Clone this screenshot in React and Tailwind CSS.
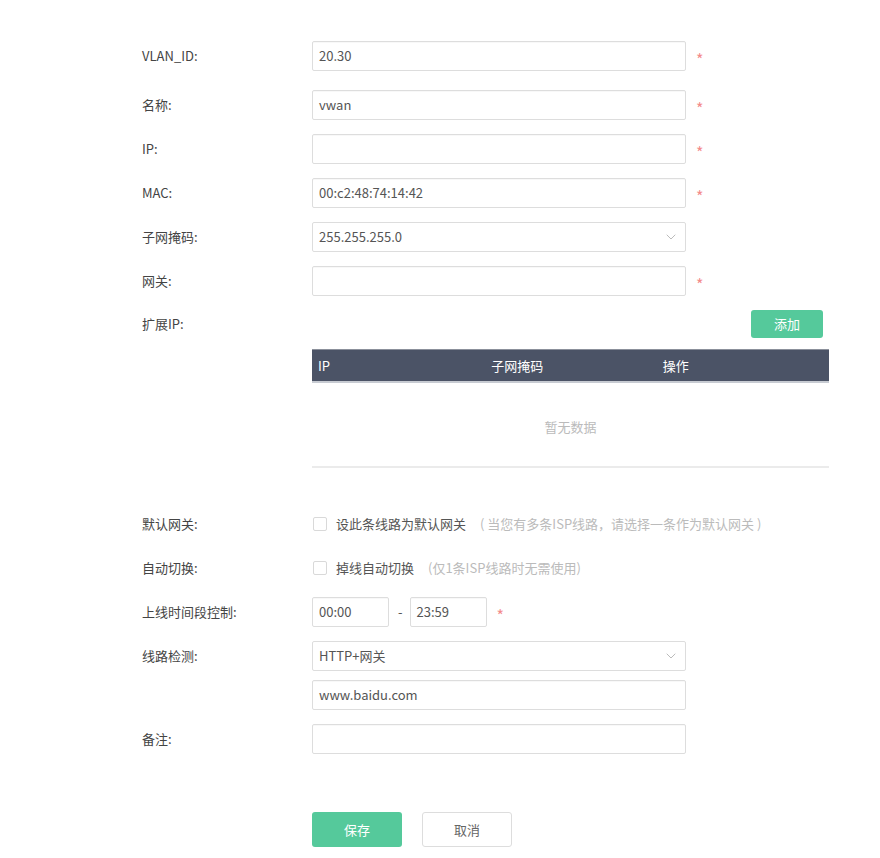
import { ChevronDown } from 'lucide-react'

const font = { fontFamily: '"Microsoft YaHei", "Noto Sans CJK SC", "Noto Sans", sans-serif' }

function Star() {
  return <span className="ml-[10px] mt-[6px] text-[16px] leading-none text-[#f38b8b]">*</span>
}

function Row({ label, children, className = '' }) {
  return (
    <div className={`flex items-center ${className}`}>
      <div className="w-[170px] shrink-0 text-[13px] text-[#444]">{label}</div>
      <div className="flex items-center">{children}</div>
    </div>
  )
}

function Input({ value = '', w = 'w-[374px]' }) {
  return (
    <div className={`${w} h-[30px] border border-[#ddd] rounded-[2px] bg-white px-[6px] flex items-center text-[13px] text-[#555] shadow-[inset_0_1px_1px_rgba(0,0,0,0.03)]`}>
      {value}
    </div>
  )
}

function Select({ value }) {
  return (
    <div className="w-[374px] h-[30px] border border-[#ddd] rounded-[2px] bg-white pl-[6px] pr-[6px] flex items-center justify-between text-[13px] text-[#555]">
      <span>{value}</span>
      <ChevronDown size={16} strokeWidth={1} className="text-[#999]" />
    </div>
  )
}

function Check({ label, hint }) {
  return (
    <div className="flex items-center text-[13px]">
      <span className="w-[14px] h-[14px] border border-[#d9d9d9] rounded-[2px] bg-white ml-[1px]" />
      <span className="ml-[9px] text-[#555]">{label}</span>
      <span className="ml-[14px] text-[#bbb]">{hint}</span>
    </div>
  )
}

export default function App() {
  return (
    <div className="w-[880px] h-[858px] bg-white pl-[142px] overflow-hidden" style={font}>
      <Row label="VLAN_ID:" className="mt-[41px]"><Input value="20.30" /><Star /></Row>
      <Row label="名称:" className="mt-[19px]"><Input value="vwan" /><Star /></Row>
      <Row label="IP:" className="mt-[14px]"><Input /><Star /></Row>
      <Row label="MAC:" className="mt-[14px]"><Input value="00:c2:48:74:14:42" /><Star /></Row>
      <Row label="子网掩码:" className="mt-[14px]"><Select value="255.255.255.0" /></Row>
      <Row label="网关:" className="mt-[14px]"><Input /><Star /></Row>

      <div className="flex items-center mt-[14px] h-[28px]">
        <div className="w-[170px] shrink-0 text-[13px] text-[#444]">扩展IP:</div>
        <div className="w-[511px] flex justify-end">
          <button className="w-[72px] h-[28px] rounded-[3px] bg-[#55c99b] text-white text-[13px]">添加</button>
        </div>
      </div>

      <div className="ml-[170px] mt-[11px] w-[517px]">
        <div className="h-[34px] bg-[#4b5366] border-t border-[#8b909b] border-b-2 border-b-[#c7cbd2] grid grid-cols-3 items-center text-[13px] text-white">
          <span className="pl-[6px]">IP</span>
          <span className="pl-[7px]">子网掩码</span>
          <span className="pl-[6px]">操作</span>
        </div>
        <div className="h-[85px] pt-[5px] border-b-2 border-[#ebebeb] flex items-center justify-center text-[13px] text-[#bbb]">
          暂无数据
        </div>
      </div>

      <Row label="默认网关:" className="mt-[46px] h-[20px]">
        <Check label="设此条线路为默认网关" hint="( 当您有多条ISP线路，请选择一条作为默认网关 )" />
      </Row>
      <Row label="自动切换:" className="mt-[24px] h-[20px]">
        <Check label="掉线自动切换" hint="(仅1条ISP线路时无需使用)" />
      </Row>
      <Row label="上线时间段控制:" className="mt-[19px]">
        <Input value="00:00" w="w-[77px]" />
        <span className="ml-[9px] mr-[7px] text-[13px] text-[#555]">-</span>
        <Input value="23:59" w="w-[77px]" />
        <Star />
      </Row>
      <Row label="线路检测:" className="mt-[14px]"><Select value="HTTP+网关" /></Row>
      <div className="ml-[170px] mt-[9px]"><Input value="www.baidu.com" /></div>
      <Row label="备注:" className="mt-[14px]"><Input /></Row>

      <div className="ml-[170px] mt-[58px] flex gap-[20px]">
        <button className="w-[90px] h-[35px] rounded-[3px] bg-[#55c99b] text-white text-[13px]">保存</button>
        <button className="w-[90px] h-[35px] rounded-[3px] bg-white border border-[#ddd] text-[#666] text-[13px]">取消</button>
      </div>
    </div>
  )
}
